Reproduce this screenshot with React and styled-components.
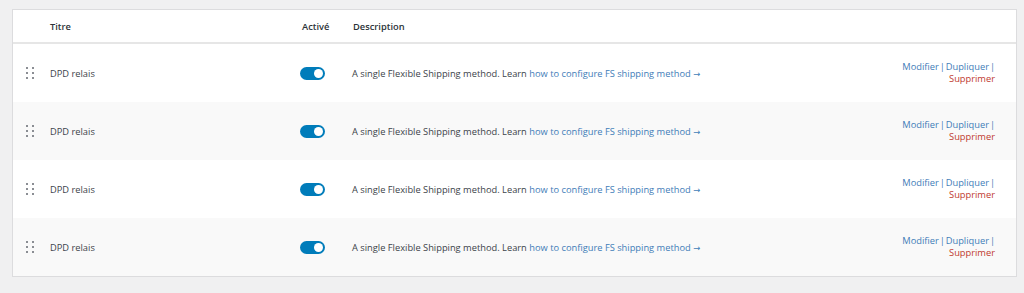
import React from 'react';
import styled, { createGlobalStyle } from 'styled-components';

const GlobalStyle = createGlobalStyle`
  body {
    margin: 0;
    background: #f0f0f1;
    font-family: "Open Sans", "Noto Sans", sans-serif;
  }
`;

const Page = styled.div`
  padding: 9px 7px 17px 12px;
`;

const Table = styled.div`
  border: 1px solid #dcdcde;
  background: #fff;
`;

const Grid = `
  display: grid;
  grid-template-columns: 37px 250px 53px 1fr auto;
  align-items: center;
`;

const Head = styled.div`
  ${Grid}
  height: 32px;
  border-bottom: 2px solid #e6e6e6;
  font-size: 9.3px;
  font-weight: 600;
  color: #2c3338;
`;

const HeadCell = styled.div`
  padding-left: ${p => p.$pad || 0}px;
`;

const Row = styled.div`
  ${Grid}
  height: 58px;
  background: ${p => (p.$alt ? '#f9f9f9' : '#fff')};
  font-size: 9.3px;
  color: #3c434a;
`;

const Handle = styled.div`
  display: grid;
  grid-template-columns: 2px 2px;
  gap: 3px 4px;
  margin-left: 13px;
  span {
    width: 2px;
    height: 2px;
    background: #646970;
    border-radius: 1px;
  }
`;

const Title = styled.div`
  color: #3c434a;
`;

const Toggle = styled.div`
  width: 25px;
  height: 13px;
  border-radius: 7px;
  background: #007cba;
  position: relative;
  &::after {
    content: '';
    position: absolute;
    right: 2px;
    top: 2px;
    width: 9px;
    height: 9px;
    border-radius: 50%;
    background: #fff;
  }
`;

const Desc = styled.div`
  white-space: nowrap;
  margin-left: -1px;
`;

const Arrow = styled.span`
  font-family: "DejaVu Sans", sans-serif;
  font-size: 8.5px;
`;

const Link = styled.a`
  color: ${p => (p.$danger ? '#c0392f' : '#3f7db8')};
  text-decoration: none;
`;

const Actions = styled.div`
  text-align: right;
  padding-right: 21px;
  line-height: 12px;
  color: #3f7db8;
  word-spacing: -1.5px;
`;

const rows = [0, 1, 2, 3];

export default function App() {
  return (
    <>
      <GlobalStyle />
      <Page>
        <Table>
          <Head>
            <div />
            <HeadCell>Titre</HeadCell>
            <HeadCell $pad={2}>Activé</HeadCell>
            <HeadCell>Description</HeadCell>
            <div />
          </Head>
          {rows.map(i => (
            <Row key={i} $alt={i % 2 === 1}>
              <Handle>
                {[0, 1, 2, 3, 4, 5].map(d => <span key={d} />)}
              </Handle>
              <Title>DPD relais</Title>
              <Toggle />
              <Desc>
                A single Flexible Shipping method. Learn{' '}
                <Link href="#">how to configure FS shipping method <Arrow>→</Arrow></Link>
              </Desc>
              <Actions>
                <Link href="#">Modifier</Link> | <Link href="#">Dupliquer</Link> |
                <br />
                <Link href="#" $danger>Supprimer</Link>
              </Actions>
            </Row>
          ))}
        </Table>
      </Page>
    </>
  );
}
